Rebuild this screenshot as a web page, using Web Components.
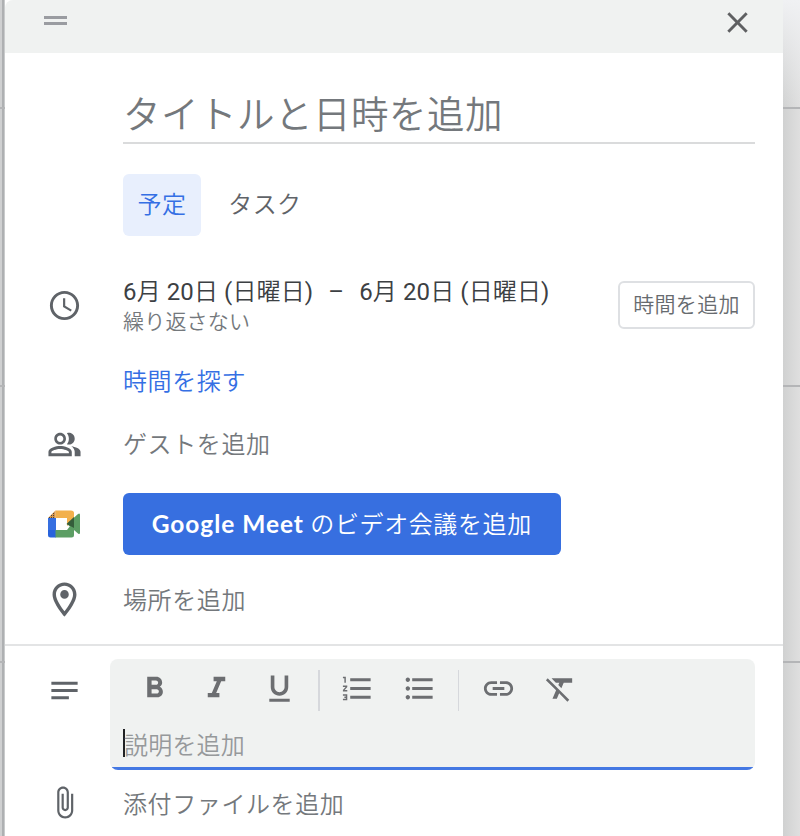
<!DOCTYPE html>
<html lang="ja">
<head>
<meta charset="utf-8">
<title>予定の追加</title>
<style>
html, body { margin: 0; height: 836px; overflow: hidden; }
body { font-family: Roboto, "Noto Sans CJK JP", sans-serif; font-weight: 350; color: #74787c; }
</style>
</head>
<body>
<calendar-backdrop>
  <event-dialog>
    <title-field>タイトルと日時を追加</title-field>
    <tab-strip><tab-chip active>予定</tab-chip><tab-chip>タスク</tab-chip></tab-strip>
    <detail-row style="height:72px;margin-top:33px"><ui-icon slot="icon" name="clock"></ui-icon><date-summary></date-summary></detail-row>
    <detail-row style="height:80px"><text-label link>時間を探す</text-label></detail-row>
    <detail-row style="height:46px;padding-bottom:1px"><ui-icon slot="icon" name="people"></ui-icon><text-label style="padding-top:1px">ゲストを追加</text-label></detail-row>
    <detail-row style="height:111px"><meet-logo slot="icon"></meet-logo><meet-button></meet-button></detail-row>
    <detail-row style="height:41px;padding-bottom:24px"><ui-icon slot="icon" name="pin" style="--size:41px"></ui-icon><text-label>場所を追加</text-label></detail-row>
    <description-section></description-section>
    <detail-row style="height:60px"><ui-icon slot="icon" name="clip"></ui-icon><text-label style="padding-top:5px">添付ファイルを追加</text-label></detail-row>
  </event-dialog>
</calendar-backdrop>
<script>
function define(name, html, setup) {
  const template = document.createElement('template');
  template.innerHTML = html;
  customElements.define(name, class extends HTMLElement {
    constructor() {
      super();
      this.attachShadow({ mode: 'open' }).append(template.content.cloneNode(true));
    }
    connectedCallback() { if (setup) setup(this, this.shadowRoot); }
  });
}

const icons = {
  clock: 'M11.99 2C6.47 2 2 6.48 2 12s4.47 10 9.99 10C17.52 22 22 17.52 22 12S17.52 2 11.99 2zM12 20c-4.42 0-8-3.58-8-8s3.58-8 8-8 8 3.58 8 8-3.58 8-8 8zm.5-13H11v6l5.25 3.15.75-1.23-4.5-2.67z',
  people: 'M9 12c2.21 0 4-1.79 4-4s-1.79-4-4-4-4 1.79-4 4 1.79 4 4 4zm0-6.2c1.22 0 2.2.98 2.2 2.2s-.98 2.2-2.2 2.2S6.800 9.220 6.800 8s.98-2.200 2.200-2.200zM15 12c2.210 0 4-1.790 4-4s-1.790-4-4-4c-.47 0-.91.1-1.330.240C14.500 5.270 15 6.580 15 8s-.5 2.730-1.330 3.760c.42.140.86.240 1.330.240zM9 13c-2.670 0-8 1.340-8 4v3h16v-3c0-2.660-5.330-4-8-4zm6 5H3v-.99C3.200 16.290 6.300 15 9 15s5.800 1.290 6 2v1zM16.670 13.130C18.040 14.060 19 15.320 19 17v3h4v-3c0-2.180-3.580-3.470-6.330-3.870z',
  pin: 'M12 2C8.13 2 5 5.130 5 9c0 5.250 7 13 7 13s7-7.750 7-13c0-3.870-3.130-7-7-7zm0 2c2.760 0 5 2.240 5 5 0 2.880-2.880 7.190-5 9.880C9.920 16.210 7 11.850 7 9c0-2.760 2.240-5 5-5zm0 2.500a2.500 2.500 0 1 0 0 5 2.500 2.500 0 1 0 0-5z',
  notes: 'M3 18h12v-2H3v2zM3 6v2h18V6H3zm0 7h18v-2H3v2z',
  clip: 'M16.500 6v11.500c0 2.210-1.790 4-4 4s-4-1.790-4-4V5c0-1.380 1.120-2.500 2.500-2.500s2.500 1.120 2.500 2.500v10.500c0 .55-.45 1-1 1s-1-.45-1-1V6H10v9.500c0 1.380 1.120 2.500 2.500 2.500s2.500-1.120 2.500-2.500V5c0-2.210-1.790-4-4-4S7 2.790 7 5v12.500c0 3.040 2.460 5.500 5.500 5.500s5.500-2.460 5.500-5.500V6h-1.500z',
  close: 'M19 6.410L17.590 5 12 10.590 6.410 5 5 6.410 10.590 12 5 17.590 6.410 19 12 13.410 17.590 19 19 17.590 13.410 12z',
  bold: 'M15.600 10.790c.97-.67 1.650-1.770 1.650-2.790 0-2.260-1.750-4-4-4H7v14h7.040c2.090 0 3.710-1.700 3.710-3.790 0-1.520-.86-2.820-2.150-3.420zM10 6.500h3c.83 0 1.500.67 1.500 1.500s-.67 1.500-1.500 1.500h-3v-3zm3.500 9H10v-3h3.500c.83 0 1.500.67 1.500 1.500s-.67 1.500-1.500 1.500z',
  italic: 'M10 4v3h2.210l-3.420 8H6v3h8v-3h-2.210l3.420-8H18V4z',
  underline: 'M12 17c3.310 0 6-2.690 6-6V3h-2.500v8c0 1.930-1.570 3.500-3.500 3.500S8.500 12.930 8.500 11V3H6v8c0 3.310 2.690 6 6 6zm-7 2v2h14v-2H5z',
  numbers: 'M2 17h2v.5H3v1h1v.5H2v1h3v-4H2v1zm1-9h1V4H2v1h1v3zm-1 3h1.800L2 13.100v.9h3v-1H3.200L5 10.900V10H2v1zm5-6v2h14V5H7zm0 14h14v-2H7v2zm0-6h14v-2H7v2z',
  bullets: 'M4 10.500c-.83 0-1.500.67-1.500 1.500s.67 1.500 1.500 1.500 1.500-.67 1.500-1.500-.67-1.500-1.500-1.500zm0-6c-.83 0-1.500.67-1.500 1.500S3.170 7.500 4 7.500 5.500 6.830 5.500 6 4.830 4.500 4 4.500zm0 12c-.83 0-1.500.68-1.500 1.500s.68 1.500 1.500 1.500 1.500-.68 1.500-1.500-.67-1.500-1.500-1.500zM7 19h14v-2H7v2zm0-6h14v-2H7v2zm0-8v2h14V5H7z',
  link: 'M3.900 12c0-1.710 1.390-3.100 3.100-3.100h4V7H7c-2.760 0-5 2.240-5 5s2.240 5 5 5h4v-1.900H7c-1.710 0-3.100-1.390-3.100-3.100zM8 13h8v-2H8v2zm9-6h-4v1.900h4c1.710 0 3.100 1.390 3.100 3.100s-1.390 3.100-3.100 3.100h-4V17h4c2.760 0 5-2.240 5-5s-2.240-5-5-5z',
  clear: 'M3.270 5L2 6.270l6.970 6.970L6.500 19h3l1.570-3.660L16.730 21 18 19.730 3.550 5.270 3.270 5zM6 5v.18L8.820 8h2.400l-.72 1.680 2.100 2.100L14.210 8H20V5H6z'
};
define('ui-icon', `<style>:host{display:block;width:var(--size,35px);height:var(--size,35px);color:#5f6368}svg{display:block;width:100%;height:100%;fill:currentColor}</style><svg viewBox="0 0 24 24"><path fill-rule="evenodd"/></svg>`,
  (el, root) => root.querySelector('path').setAttribute('d', icons[el.getAttribute('name')]));

define('calendar-backdrop', `<style>
:host{display:block;box-sizing:border-box;height:836px;padding:0 17px 0 5px;
background:
linear-gradient(#b4b5b7,#b4b5b7) 0 107px/100% 2px no-repeat,
linear-gradient(#b4b5b7,#b4b5b7) 0 385px/100% 2px no-repeat,
linear-gradient(#b4b5b7,#b4b5b7) 0 661px/100% 2px no-repeat,
linear-gradient(90deg,#cfd0d1 0 2px,#aeb0b2 2px 4px,#c9cbcc 4px) 0 0/5px 100% no-repeat,
linear-gradient(#f0f1f3,rgba(240,241,243,0) 110px) 783px 0/17px 100% no-repeat,
linear-gradient(90deg,#d0d1d1,#dfdfdf) 783px 0/17px 100% no-repeat}
</style><slot></slot>`);

define('event-dialog', `<style>
:host{display:flex;flex-direction:column;width:778px;height:836px;background:#fff;overflow:hidden;border-radius:8px 0 0 0}
header{height:53px;flex:none;box-sizing:border-box;background:#f0f2f1;display:flex;justify-content:space-between;padding:5px 28px 0 39px}
.grip{box-sizing:border-box;width:23px;height:9px;margin-top:11px;border:solid #9a9ca1;border-width:3px 0}
ui-icon{color:#5f6062}
</style><header><div class="grip"></div><ui-icon name="close"></ui-icon></header><slot></slot>`);

define('title-field', `<style>
:host{display:block;box-sizing:border-box;flex:none;height:91px;margin:0 28px 0 118px;padding-top:32px;border-bottom:2px solid #dadbdc;font-size:37.5px;line-height:60px;letter-spacing:.5px;white-space:nowrap}
</style><slot></slot>`);

define('tab-strip', `<style>:host{display:flex;flex:none;gap:13px;margin:30px 0 0 118px;height:62px}</style><slot></slot>`);
define('tab-chip', `<style>
:host{display:block;box-sizing:border-box;padding:0 14.500px;border-radius:6px;font-size:24px;letter-spacing:.4px;line-height:62px;color:#5f6368;white-space:nowrap}
:host([active]){background:#e8effd;color:#356fe4}
</style><slot></slot>`);

define('detail-row', `<style>
:host{display:grid;grid-template-columns:118px 1fr;align-items:center;flex:none}
.icon{display:grid;place-items:center}
</style><div class="icon"><slot name="icon"></slot></div><slot style="grid-column:2"></slot>`);

define('text-label', `<style>
:host{display:block;padding-top:2px;font-size:24px;letter-spacing:.6px;line-height:36px;white-space:nowrap}
:host([link]){color:#356fe4}
</style><slot></slot>`);

define('date-summary', `<style>
:host{display:flex;justify-content:space-between;align-items:center;padding-right:28px;white-space:nowrap}
.date{font-size:24px;line-height:32px;letter-spacing:.13px;color:#3c4043;display:flex;gap:15px;padding-top:2px}
b{font-weight:400}
.repeat{font-size:21px;line-height:28px;letter-spacing:.2px}
button{box-sizing:border-box;width:137px;height:48px;margin:0;padding:0;border:2px solid #dee0e3;border-radius:6px;background:#fff;font:350 21px/28px Roboto,"Noto Sans CJK JP",sans-serif;letter-spacing:.3px;color:#676b6f}
</style><div><div class="date"><span><b>6</b>月 <b>20</b>日 <b>(</b>日曜日<b>)</b></span><b>–</b><span><b>6</b>月 <b>20</b>日 <b>(</b>日曜日<b>)</b></span></div><div class="repeat">繰り返さない</div></div><button>時間を追加</button>`);

define('meet-logo', `<style>:host,svg{display:block;width:32px;height:28px}</style>
<svg viewBox="0 0 32 28"><path fill="#366fe0" d="M0 8h8v12H0z"/><path fill="#2863dc" d="M0 20h8v7.500H2.500Q0 27.500 0 25z"/><path fill="#5c9e64" d="M7.500 20H19l7-9v14q0 2.500-2.500 2.500h-16z"/><path fill="#f2b04c" d="M7.500.5H23q3 0 3 2.500v7l-7 6V8H7.500z"/><path fill="#d99749" d="M0 8 7.500.5V8z"/><path fill="#4d4037" d="M1 7h1v1H1zM3 5h1v1H3zM3 7h1v1H3zM5 3h1v1H5zM5 5h1v1H5zM5 7h1v1H5z"/><path fill="#5c9e64" d="m19 14 11-10q2-1.500 2 1v17.500q0 2.500-2 1L19 14z"/><path fill="#355e3b" d="m18.500 14 7.500-7v11z"/></svg>`);

define('meet-button', `<style>
:host{display:flex;align-items:center;justify-content:center;box-sizing:border-box;width:437.5px;height:62px;padding-top:1px;border-radius:6px;background:#376fe0;color:#fff;font-size:24px;line-height:36px;letter-spacing:.6px;white-space:nowrap}
b{font:700 24.500px/36px Lato,sans-serif;letter-spacing:.95px}
</style><span><b>Google Meet</b> のビデオ会議を追加</span>`);

define('description-section', `<style>
:host{display:grid;grid-template-columns:105px 645px;flex:none;box-sizing:border-box;height:128px;border-top:2px solid #e3e4e5;padding-top:13px}
.icon{padding:14px 0 0 41.500px}
.editor{height:111px;box-sizing:border-box;background:linear-gradient(#4478e3,#4478e3) 0 100%/100% 3px no-repeat #f0f2f1;border-radius:8px;overflow:hidden}
.tools{display:flex;align-items:center;height:59px;padding-left:13px}
.tools ui-icon{margin:0 13.750px;flex:none;color:#6c6e71}
i{width:1.500px;height:41px;margin:3px 6.500px 0 7.500px;background:#d6d8dc;flex:none}
i+ui-icon[name=link]{margin-left:15px}
.input{display:flex;align-items:center;padding-left:13px;font-size:24px;letter-spacing:.2px;line-height:36px;margin-top:10px;color:#96999b}
.caret{width:2px;height:28px;margin:-6px -1px 0 0;background:#202124}
</style><div class="icon"><ui-icon name="notes"></ui-icon></div><div class="editor"><div class="tools"><ui-icon name="bold"></ui-icon><ui-icon name="italic"></ui-icon><ui-icon name="underline"></ui-icon><i></i><ui-icon name="numbers"></ui-icon><ui-icon name="bullets"></ui-icon><i style="margin-left:6.5px"></i><ui-icon name="link"></ui-icon><ui-icon name="clear"></ui-icon></div><div class="input"><span class="caret"></span><span>説明を追加</span></div></div>`);
</script>
</body>
</html>
